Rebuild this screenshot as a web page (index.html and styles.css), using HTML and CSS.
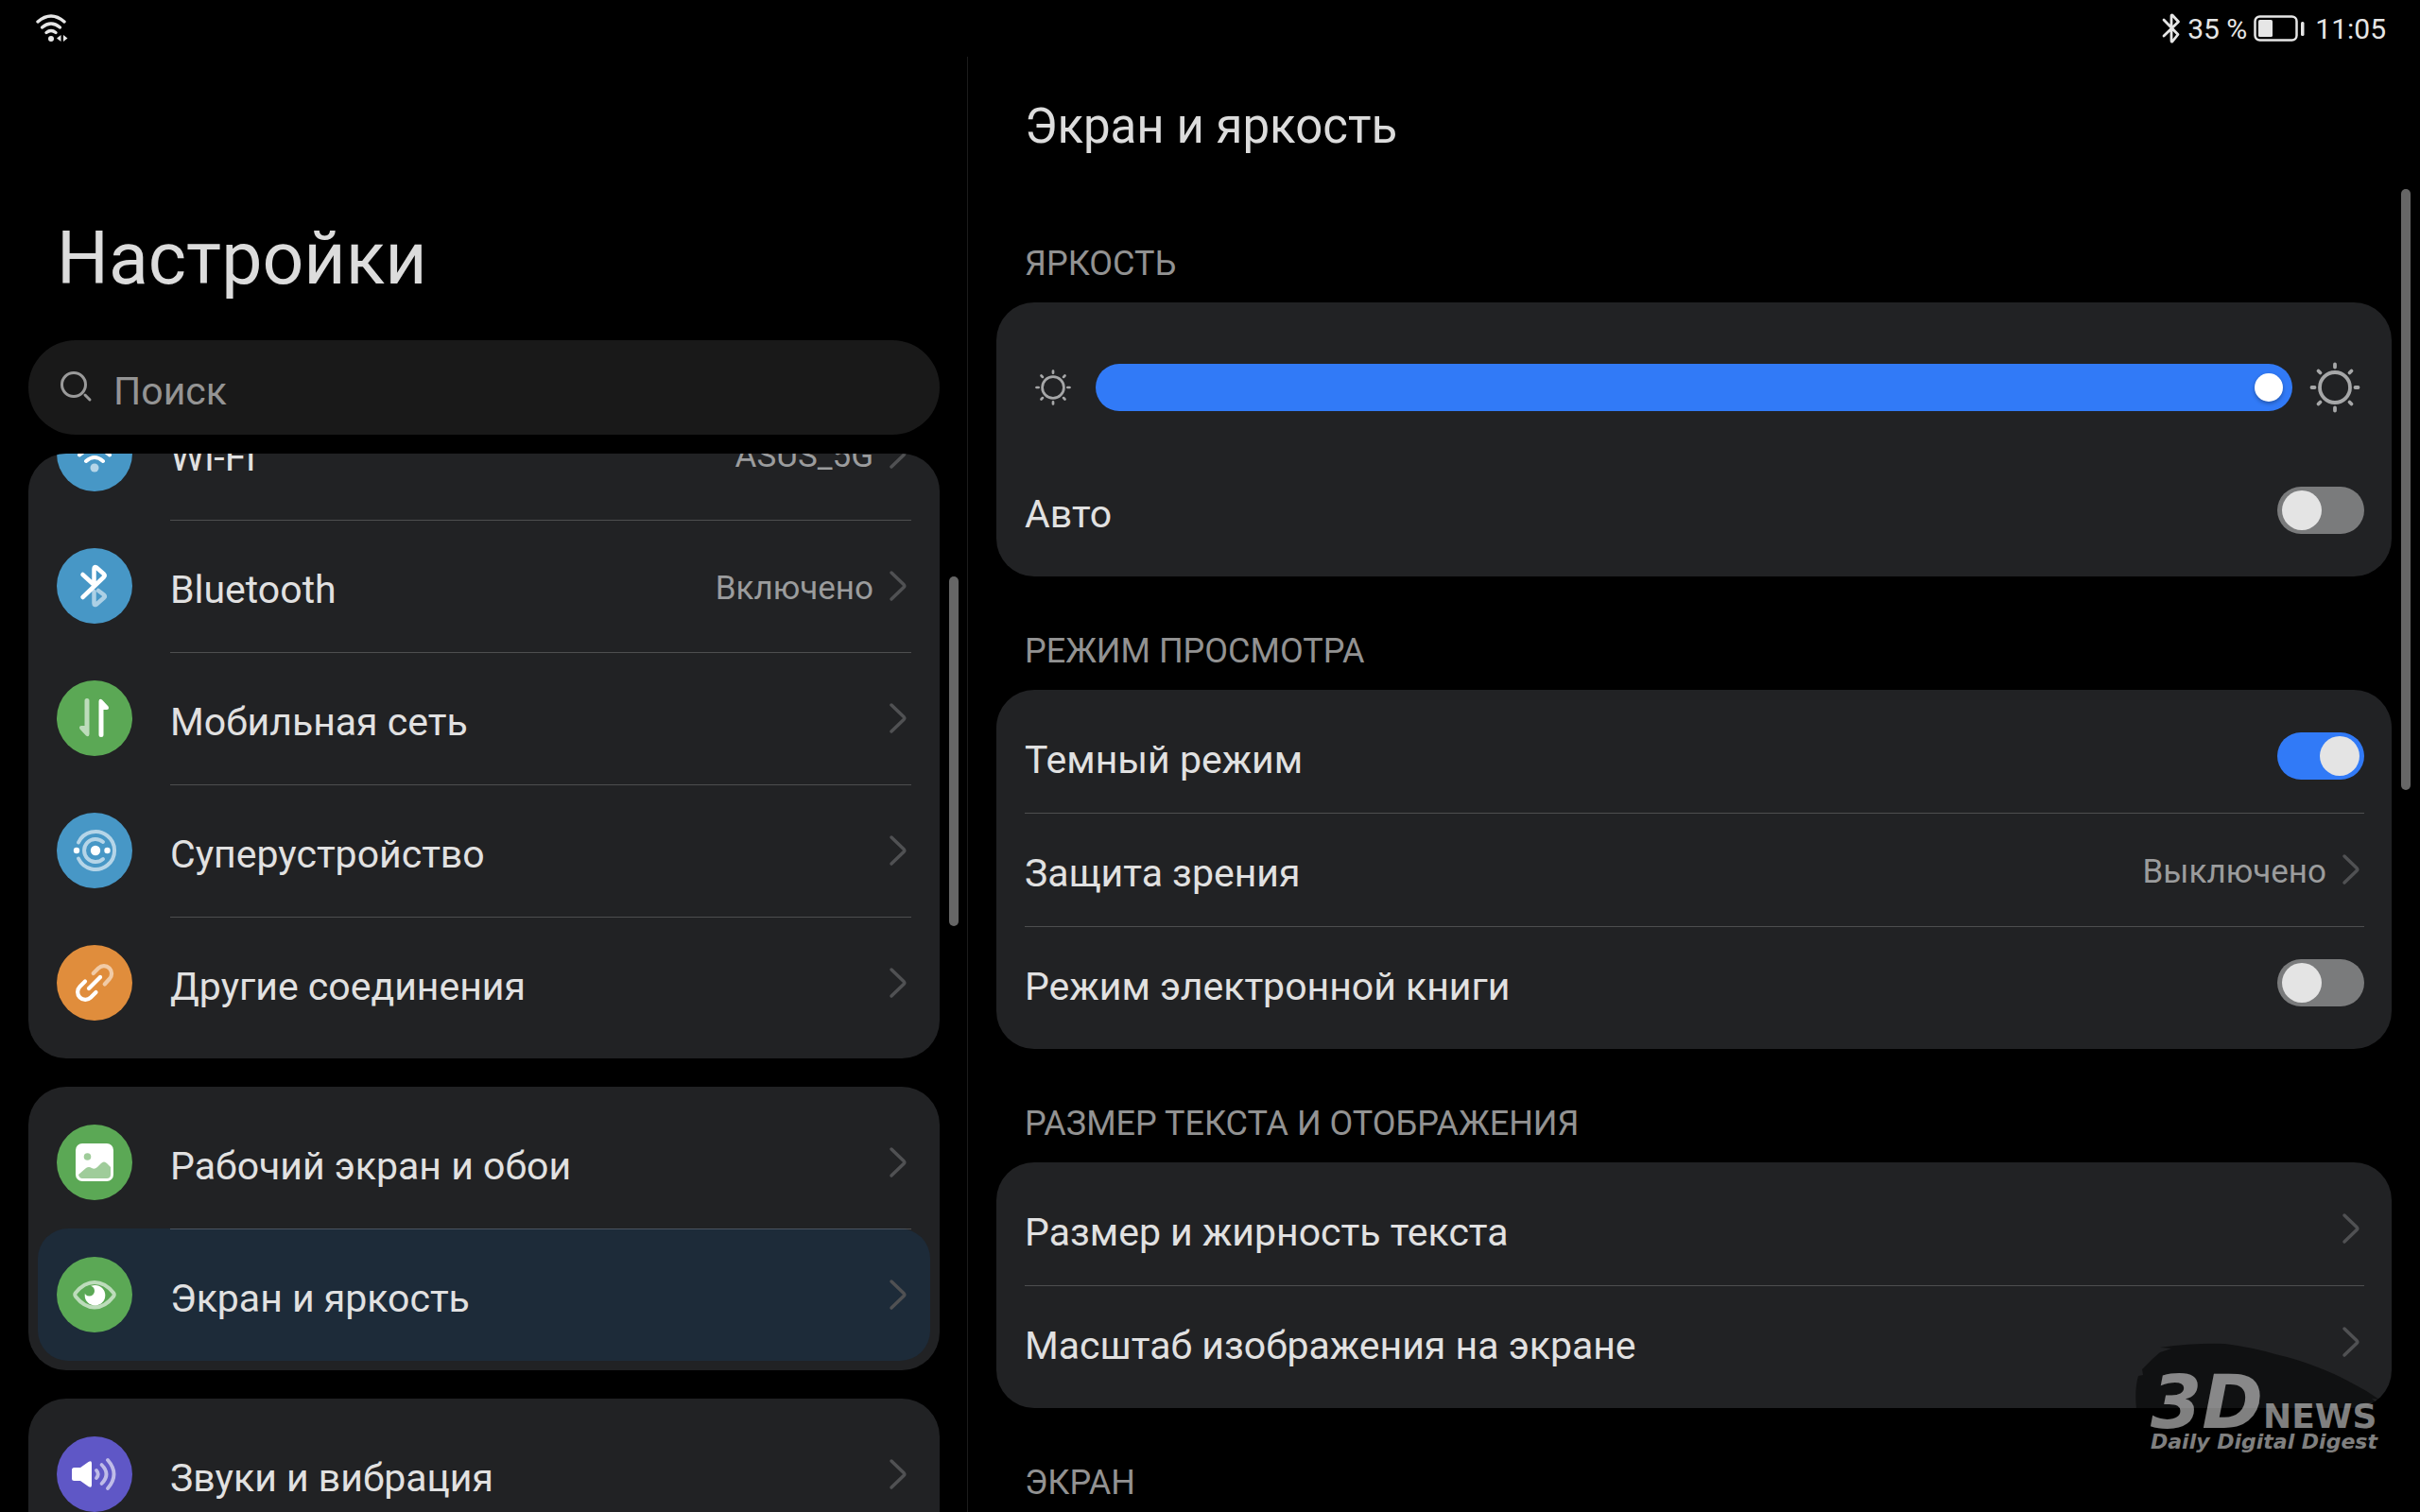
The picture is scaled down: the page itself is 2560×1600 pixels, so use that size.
FILE: index.html
```
<!DOCTYPE html>
<html lang="ru">

<head>
    <meta charset="UTF-8">
    <meta name="viewport" content="width=device-width, initial-scale=1.0">
    <title>Настройки</title>
    <link rel="stylesheet" href="styles.css">
</head>

<body>
    <!-- shared icons -->
    <svg class="defs" aria-hidden="true">
        <symbol id="chevron" viewBox="0 0 20 36">
            <path d="M3 4 L16 16.5 Q17.500 18 16 19.500 L3 32" fill="none" stroke="currentColor" stroke-width="3.500" stroke-linecap="round" />
        </symbol>
        <symbol id="sun" viewBox="0 0 56 56">
            <g fill="none" stroke="currentColor" stroke-width="3.800" stroke-linecap="round">
                <circle cx="28" cy="28" r="16" />
                <path d="M28 3.500v3M28 49.500v3M3.500 28h3M49.500 28h3M10.500 10.500l2 2M43.500 43.500l2 2M10.500 45.500l2-2M43.500 12.500l2-2" />
            </g>
        </symbol>
    </svg>

    <header class="status-bar">
        <svg class="status-wifi" viewBox="0 0 36 30">
            <g fill="none" stroke="#e6e6e6" stroke-width="3.400" stroke-linecap="round">
                <path d="M4 8 Q18 -4 32 8" />
                <path d="M8.500 14 Q18 6 27.500 14" />
                <path d="M13 19.500 Q18 15.500 23 19.500" />
            </g>
            <circle cx="18" cy="26" r="3" fill="#e6e6e6" />
            <path d="M28.500 22v7l-4.500-3.500zM31 22v7l4.500-3.500z" fill="#e6e6e6" />
        </svg>
        <div class="status-right">
            <svg class="status-bt" viewBox="0 0 20 32">
                <path d="M2 7 L17 22.500 L11 30 Q10 30.500 10 29 V3 Q10 1.500 11 2 L17.500 9 L2 24" fill="none" stroke="#e6e6e6" stroke-width="2.800" stroke-linecap="round" stroke-linejoin="round" />
            </svg>
            <span>35 %</span>
            <svg class="status-battery" viewBox="0 0 54 28">
                <rect x="1.500" y="1.500" width="44" height="25" rx="5" fill="none" stroke="#e6e6e6" stroke-width="2.500" />
                <rect x="5" y="5" width="15" height="18" rx="1.500" fill="#e6e6e6" />
                <rect x="50" y="7" width="3.500" height="15" rx="1.500" fill="#e6e6e6" />
            </svg>
            <span class="clock">11:05</span>
        </div>
    </header>

    <div class="container">
        <nav class="sidebar">
            <h1>Настройки</h1>
            <label class="search">
                <svg class="search-icon" viewBox="0 0 36 36">
                    <g fill="none" stroke="#9a9a9a" stroke-width="3" stroke-linecap="round">
                        <circle cx="16" cy="15" r="12.500" />
                        <path d="M28 26l5 5" />
                    </g>
                </svg>
                <input type="search" class="search-field" placeholder="Поиск" aria-label="Поиск">
            </label>

            <div class="menu">
                <div class="card card-scrolled">
                    <a href="#" class="row">
                        <svg class="icon" viewBox="0 0 80 80">
                            <circle cx="40" cy="40" r="40" fill="#4797c6" />
                            <g fill="none" stroke="#fff" stroke-width="4" stroke-linecap="round">
                                <path d="M18 35q22-19 44 0" />
                                <path d="M24 41.500q16-14 32 0" />
                                <path d="M31 48q9-8 18 0" />
                            </g>
                            <circle cx="40" cy="55" r="4.500" fill="#fff" opacity="0.600" />
                        </svg>
                        <span class="row-body"><span class="label">Wi-Fi</span><span class="value">ASUS_5G</span><svg class="chevron"><use href="#chevron" /></svg></span>
                    </a>
                    <a href="#" class="row">
                        <svg class="icon" viewBox="0 0 80 80">
                            <circle cx="40" cy="40" r="40" fill="#4797c6" />
                            <g fill="none" stroke="#fff" stroke-width="4.500" stroke-linecap="round" stroke-linejoin="round">
                                <path d="M44 45l6 4.500q1.500 1.500 0 3l-8 7q-2.500 1.500-2.500-1V46" opacity="0.550" />
                                <path d="M27.500 28L39.500 39V22q0-3 2.500-1.500l8 7q1.500 1.500 0 3L27.500 52" />
                            </g>
                        </svg>
                        <span class="row-body"><span class="label">Bluetooth</span><span class="value">Включено</span><svg class="chevron"><use href="#chevron" /></svg></span>
                    </a>
                    <a href="#" class="row">
                        <svg class="icon" viewBox="0 0 80 80">
                            <circle cx="40" cy="40" r="40" fill="#5ba855" />
                            <path d="M44.500 22q.5-3.500 3.500-1.500l6.500 7q1.500 3-1.500 3.500h-3.500v26.500a2.500 2.500 0 0 1-5 0z" fill="#fff" />
                            <path d="M44.500 22q.5-3.500 3.500-1.500l6.500 7q1.500 3-1.500 3.500h-3.500v26.500a2.500 2.500 0 0 1-5 0z" fill="#fff" opacity="0.600" transform="rotate(180 39.500 39.500)" />
                        </svg>
                        <span class="row-body"><span class="label">Мобильная сеть</span><svg class="chevron"><use href="#chevron" /></svg></span>
                    </a>
                    <a href="#" class="row">
                        <svg class="icon" viewBox="0 0 80 80">
                            <circle cx="40" cy="40" r="40" fill="#4797c6" />
                            <g fill="none" stroke="#fff" stroke-width="4" stroke-linecap="round" opacity="0.600">
                                <path d="M23 31.500a20 20 0 1 1 0 17" />
                                <path d="M49 31a12 12 0 1 0 0 18" />
                            </g>
                            <g fill="#fff">
                                <circle cx="41" cy="40" r="5.200" />
                                <circle cx="21" cy="40" r="3.200" />
                                <circle cx="53.500" cy="40" r="3.200" />
                            </g>
                        </svg>
                        <span class="row-body"><span class="label">Суперустройство</span><svg class="chevron"><use href="#chevron" /></svg></span>
                    </a>
                    <a href="#" class="row">
                        <svg class="icon" viewBox="0 0 80 80">
                            <circle cx="40" cy="40" r="40" fill="#e08d3c" />
                            <g fill="none" stroke="#fff" stroke-width="4.200" stroke-linecap="round">
                                <path d="M38.700 30l5.500-5.500a8.100 8.100 0 0 1 11.500 11.500l-5 5.500" opacity="0.550" />
                                <path d="M34 46l12-12" />
                                <path d="M30 38.500l-5.500 5.500a8.100 8.100 0 0 0 11.500 11.500l5.500-5.500" />
                            </g>
                        </svg>
                        <span class="row-body"><span class="label">Другие соединения</span><svg class="chevron"><use href="#chevron" /></svg></span>
                    </a>
                </div>

                <div class="card">
                    <a href="#" class="row">
                        <svg class="icon" viewBox="0 0 80 80">
                            <circle cx="40" cy="40" r="40" fill="#5ba855" />
                            <rect x="20" y="20" width="40" height="40" rx="7" fill="#fff" />
                            <g fill="#9fcc9a">
                                <circle cx="32.500" cy="34" r="3.800" />
                                <path d="M23 53l8-7q3-2 6 0 3 2 6-1l4-4q3-3 6 0l4 4v8q0 4-4 4H27q-3 0-4-4z" />
                            </g>
                        </svg>
                        <span class="row-body"><span class="label">Рабочий экран и обои</span><svg class="chevron"><use href="#chevron" /></svg></span>
                    </a>
                    <a href="#" class="row active" aria-current="page">
                        <svg class="icon" viewBox="0 0 80 80">
                            <circle cx="40" cy="40" r="40" fill="#5ba855" />
                            <path d="M20 38q9-11 20-11t20 11q1.500 2 0 4-9 11.500-20 11.500T20 42q-1.500-2 0-4z" fill="none" stroke="#fff" stroke-width="4" opacity="0.600" />
                            <circle cx="40.500" cy="40.700" r="10.800" fill="#fff" />
                            <circle cx="34.500" cy="36" r="5.500" fill="#5ba855" />
                        </svg>
                        <span class="row-body"><span class="label">Экран и яркость</span><svg class="chevron"><use href="#chevron" /></svg></span>
                    </a>
                </div>

                <div class="card">
                    <a href="#" class="row">
                        <svg class="icon" viewBox="0 0 80 80">
                            <circle cx="40" cy="40" r="40" fill="#5f57c6" />
                            <path d="M18.500 33H25l8.500-6q3.500-2 3.500 1.500v23q0 3.500-3.500 1.500L25 47h-6.500q-2.500 0-2.500-2.500v-9q0-2.500 2.500-2.500z" fill="#fff" />
                            <g fill="none" stroke="#fff" stroke-width="3.800" stroke-linecap="round" opacity="0.600">
                                <path d="M42 36q3.500 4 0 8" />
                                <path d="M47.500 30q10 10 0 20" />
                                <path d="M54 25q13 15 0 30" />
                            </g>
                        </svg>
                        <span class="row-body"><span class="label">Звуки и вибрация</span><svg class="chevron"><use href="#chevron" /></svg></span>
                    </a>
                    <a href="#" class="row">
                        <span class="icon"></span>
                        <span class="row-body"></span>
                    </a>
                </div>
            </div>
            <div class="scrollbar scrollbar-menu"></div>
        </nav>

        <main class="content">
            <h2>Экран и яркость</h2>

            <h3>ЯРКОСТЬ</h3>
            <section class="card">
                <div class="brightness">
                    <svg class="sun-small"><use href="#sun" /></svg>
                    <input type="range" class="slider" min="0" max="100" value="100" aria-label="Яркость">
                    <svg class="sun-big"><use href="#sun" /></svg>
                </div>
                <label class="option">
                    <span class="label">Авто</span>
                    <input type="checkbox" class="toggle">
                </label>
            </section>

            <h3>РЕЖИМ ПРОСМОТРА</h3>
            <section class="card">
                <label class="option">
                    <span class="label">Темный режим</span>
                    <input type="checkbox" class="toggle" checked>
                </label>
                <a href="#" class="option">
                    <span class="label">Защита зрения</span>
                    <span class="value">Выключено</span>
                    <svg class="chevron"><use href="#chevron" /></svg>
                </a>
                <label class="option">
                    <span class="label">Режим электронной книги</span>
                    <input type="checkbox" class="toggle">
                </label>
            </section>

            <h3>РАЗМЕР ТЕКСТА И ОТОБРАЖЕНИЯ</h3>
            <section class="card">
                <a href="#" class="option">
                    <span class="label">Размер и жирность текста</span>
                    <svg class="chevron"><use href="#chevron" /></svg>
                </a>
                <a href="#" class="option">
                    <span class="label">Масштаб изображения на экране</span>
                    <svg class="chevron"><use href="#chevron" /></svg>
                </a>
            </section>

            <h3>ЭКРАН</h3>
            <div class="scrollbar scrollbar-content"></div>
        </main>
    </div>

    <div class="watermark">
        <svg class="brush" viewBox="0 0 262 90">
            <path d="M4 90Q-3 55 3 35L8 34 7 28 18 17 26 10 38 6 26 5Q60 0 95 1 125 5 148 12 170 17 188 24 210 32 228 42 244 50 258 60L250 59 256 64 242 63 248 68 240 68V90z" fill="#000" opacity="0.500" />
        </svg>
        <div class="logo"><span class="logo-3d">3D</span><span class="logo-news">NEWS</span></div>
        <div class="tagline">Daily Digital Digest</div>
    </div>
</body>

</html>
```
FILE: styles.css
```
* {
    box-sizing: border-box;
}

body {
    font-family: Roboto, "Noto Sans", sans-serif;
    background-color: #000;
    color: #e1e1e1;
    margin: 0;
    height: 100vh;
    overflow: hidden;
    display: flex;
    flex-direction: column;
    position: relative;
}

a {
    color: inherit;
    text-decoration: none;
}

h1,
h2,
h3 {
    margin: 0;
    font-weight: 400;
}

.defs {
    position: absolute;
    width: 0;
    height: 0;
}

/* status bar */
.status-bar {
    height: 60px;
    padding: 0 36px;
    display: flex;
    align-items: center;
    justify-content: space-between;
    font-size: 30px;
    line-height: 36px;
    color: #e6e6e6;
}

.status-wifi {
    width: 36px;
    height: 30px;
}

.status-right {
    display: flex;
    align-items: center;
    gap: 7px;
}

.status-right span {
    padding-top: 2px;
}

.status-bt {
    width: 20px;
    height: 32px;
}

.status-battery {
    width: 54px;
    height: 28px;
}

.clock {
    margin-left: 4px;
}

/* layout */
.container {
    flex: 1;
    min-height: 0;
    display: grid;
    grid-template-columns: 2fr 3fr;
}

.sidebar {
    position: relative;
    min-height: 0;
    padding: 160px 29px 0 30px;
    border-right: 1px solid #1c1c1c;
    display: flex;
    flex-direction: column;
}

.content {
    position: relative;
    min-height: 0;
    padding: 30px 30px 0;
    overflow: hidden;
}

h1 {
    padding: 4px 30px 36px;
    font-size: 77px;
    line-height: 100px;
    color: #dcdcdc;
}

h2 {
    padding: 8px 30px 50px;
    font-size: 51px;
    line-height: 72px;
    color: #dcdcdc;
}

h3 {
    height: 120px;
    padding: 55px 30px 0;
    font-size: 36px;
    line-height: 48px;
    color: #929292;
}

h2 + h3 {
    height: 100px;
    padding-top: 35px;
}

.card {
    background-color: #212224;
    border-radius: 40px;
    padding: 10px;
}

/* search */
.search {
    display: flex;
    align-items: center;
    flex-shrink: 0;
    height: 100px;
    margin-bottom: 20px;
    padding: 0 32px;
    border-radius: 50px;
    background-color: #191919;
}

.search-icon {
    width: 36px;
    height: 36px;
    margin-right: 22px;
}

.search-field {
    flex: 1;
    border: none;
    outline: none;
    background: none;
    padding: 8px 0 0;
    font: inherit;
    font-size: 41px;
    line-height: 48px;
    color: #e1e1e1;
}

.search-field::placeholder {
    color: #949494;
    opacity: 1;
}

/* menu */
.menu {
    flex: 1;
    min-height: 0;
    overflow: hidden;
    border-radius: 40px 40px 0 0;
    display: flex;
    flex-direction: column;
    gap: 30px;
}

.menu .card {
    flex-shrink: 0;
}

/* first card is partly scrolled out of view */
.menu .card-scrolled {
    margin-top: -80px;
}

.row {
    display: flex;
    align-items: center;
    gap: 40px;
    padding: 0 20px;
    border-radius: 32px;
}

.row.active {
    background-color: #1d2b39;
}

.icon {
    width: 80px;
    height: 80px;
    flex-shrink: 0;
}

.row-body {
    flex: 1;
    height: 140px;
    display: flex;
    align-items: center;
}

.row + .row .row-body {
    box-shadow: inset 0 1px rgba(255, 255, 255, 0.2);
}

.label {
    flex: 1;
    padding-top: 8px;
    font-size: 41px;
    line-height: 50px;
}

.value {
    padding-top: 6px;
    font-size: 35px;
    line-height: 48px;
    color: #9b9c9d;
}

.chevron {
    width: 20px;
    height: 36px;
    margin: 0 4px 0 16px;
    color: #505153;
}

/* options */
.option {
    display: flex;
    align-items: center;
    height: 120px;
    margin: 0 19px 0 20px;
}

.option + .option {
    box-shadow: inset 0 1px rgba(255, 255, 255, 0.2);
}

.brightness {
    display: flex;
    align-items: center;
    height: 150px;
    padding: 20px 22px 10px 30px;
}

.sun-small {
    width: 40px;
    height: 40px;
    margin-right: 25px;
    color: #a6a7a8;
}

.sun-big {
    width: 56px;
    height: 56px;
    margin-left: 17px;
    color: #a6a7a8;
}

.slider {
    appearance: none;
    flex: 1;
    height: 50px;
    margin: 0;
    padding: 0 10px;
    border-radius: 25px;
    background-color: #317af7;
}

.slider::-webkit-slider-thumb {
    appearance: none;
    width: 30px;
    height: 30px;
    border-radius: 50%;
    background-color: #fff;
    box-shadow: 0 2px 4px rgba(0, 0, 0, 0.3);
}

.toggle {
    appearance: none;
    width: 92px;
    height: 50px;
    margin: 0;
    padding: 4px 5px;
    border-radius: 25px;
    background-color: #7a7b7c;
    display: flex;
}

.toggle::before {
    content: "";
    width: 42px;
    height: 42px;
    border-radius: 50%;
    background-color: #e4e4e4;
}

.toggle:checked {
    background-color: #317af7;
    justify-content: flex-end;
}

/* scrollbars */
.scrollbar {
    position: absolute;
    width: 10px;
    border-radius: 5px;
    background-color: #666;
}

.scrollbar-menu {
    top: 550px;
    right: 9px;
    height: 370px;
}

.scrollbar-content {
    top: 140px;
    right: 10px;
    height: 636px;
}

/* watermark */
.watermark {
    position: absolute;
    right: 39px;
    bottom: 62px;
    width: 262px;
    padding: 37px 0 0 16px;
    font-family: "DejaVu Sans", sans-serif;
    font-weight: 700;
    color: rgba(255, 255, 255, 0.5);
    white-space: nowrap;
}

.brush {
    position: absolute;
    left: 0;
    top: 0;
    width: 262px;
    height: 90px;
}

.logo {
    position: relative;
    display: flex;
    align-items: baseline;
    height: 56px;
    line-height: 52px;
}

.logo-3d {
    font-size: 78px;
    font-style: italic;
}

.logo-news {
    font-size: 36px;
    line-height: 36px;
}

.tagline {
    position: relative;
    font-size: 22px;
    line-height: 24px;
    font-style: italic;
}
```
